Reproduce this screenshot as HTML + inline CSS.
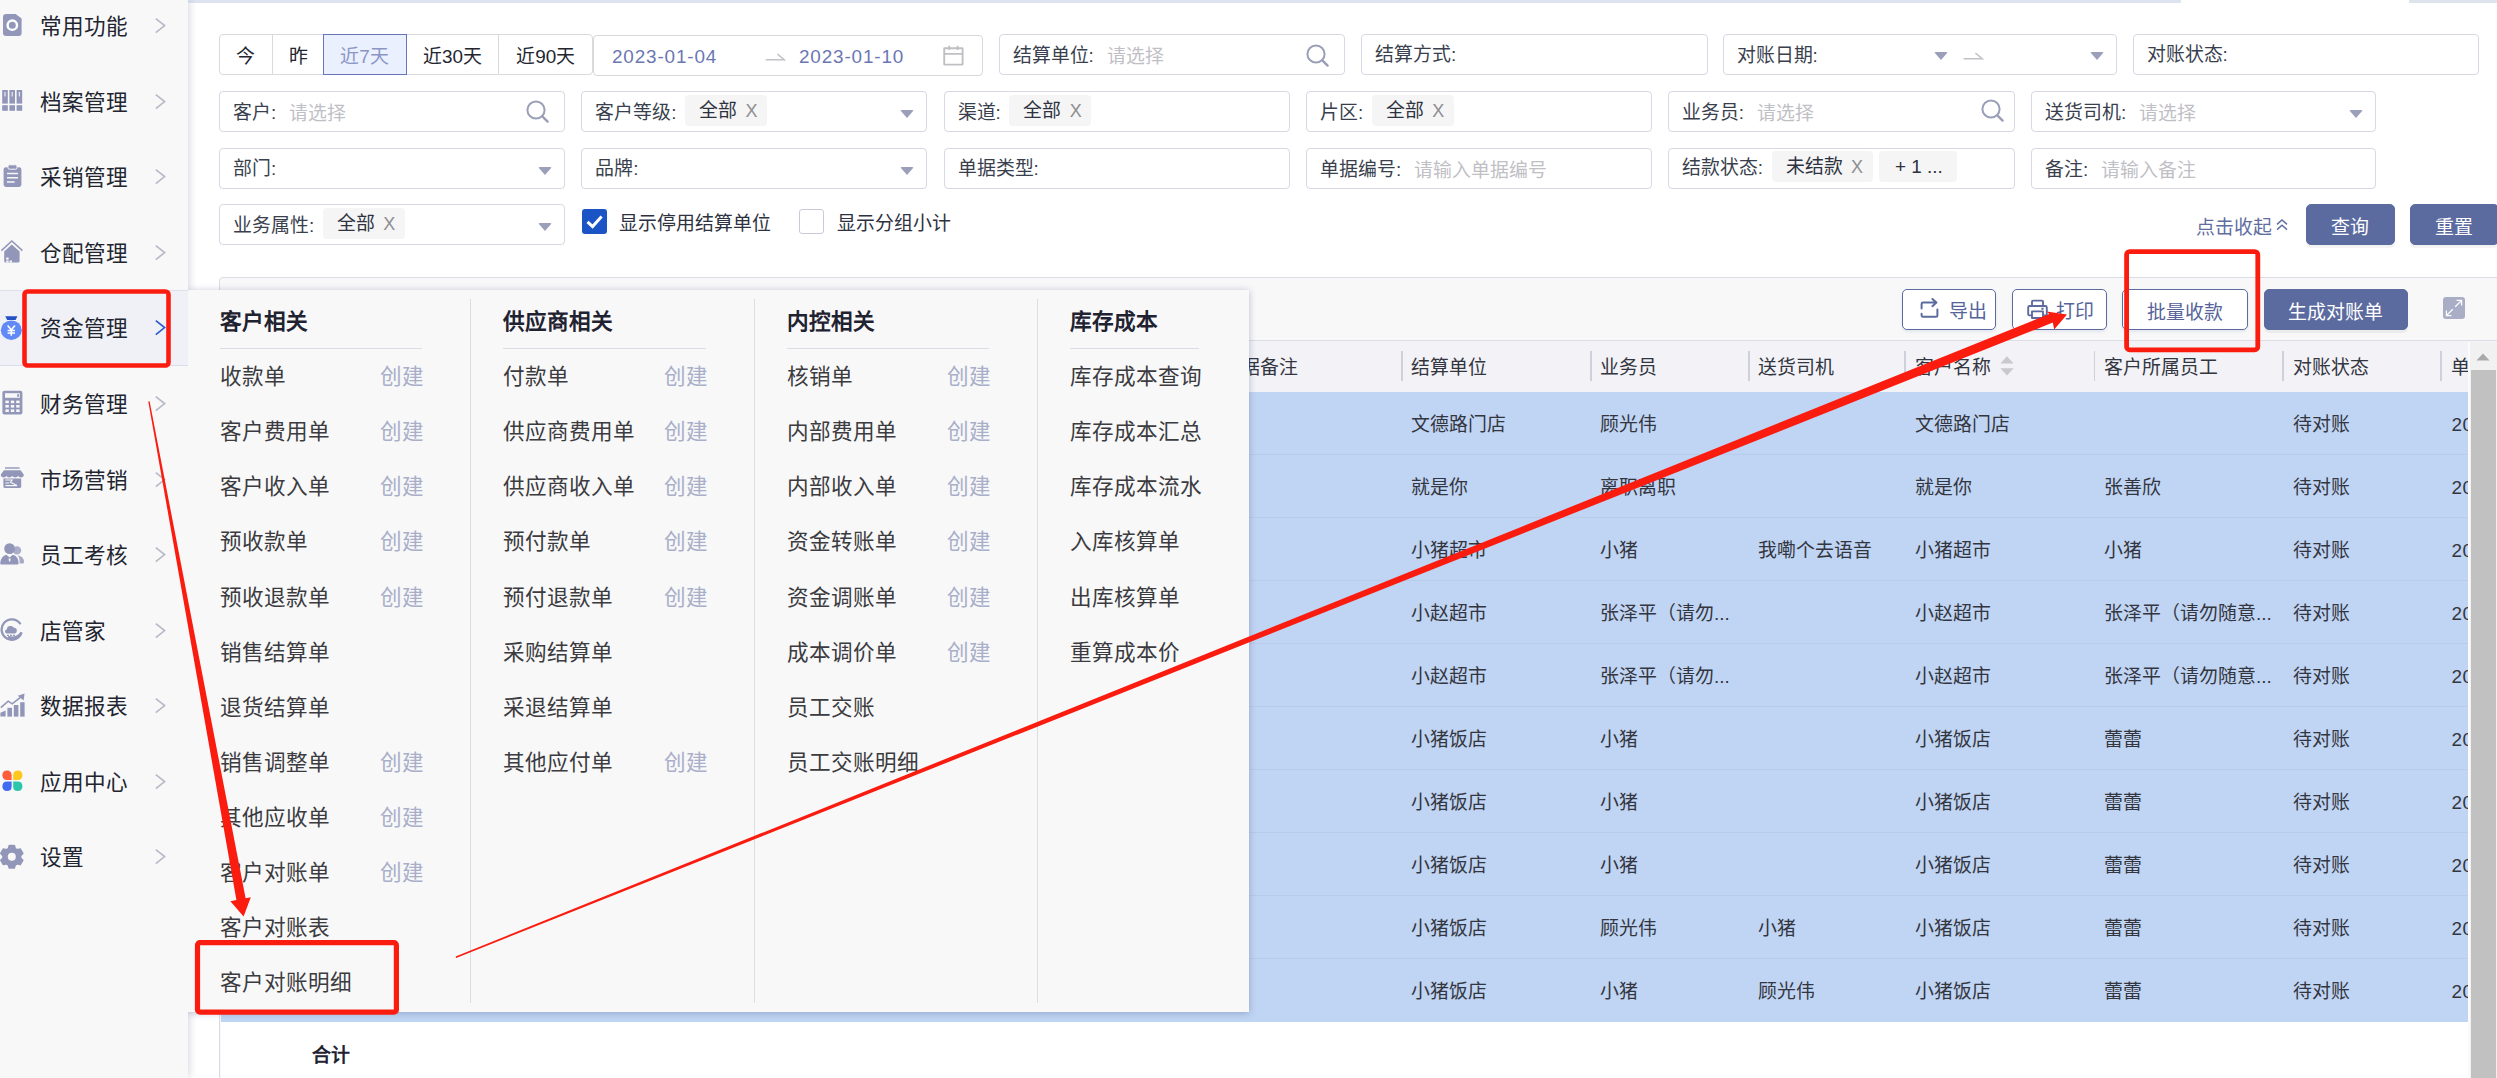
<!DOCTYPE html>
<html lang="zh-CN"><head><meta charset="utf-8"><title>客户对账明细</title>
<style>
*{box-sizing:border-box;margin:0;padding:0}
html,body{width:2497px;height:1078px;overflow:hidden;background:#fff}
body{position:relative;font-family:"Liberation Sans",sans-serif;font-size:18.9px;color:#353a48}
.abs{position:absolute}
.box{position:absolute;height:40.5px;border:1.35px solid #d6d8e4;border-radius:4px;background:#fff;white-space:nowrap;overflow:hidden}
.box .lb{position:absolute;left:13px;top:0;line-height:37px;color:#3a3f4e}
.box .lb b{font-weight:normal;position:relative}
.box .ph{color:#bfc0c6;margin-left:13px;position:relative}
.tag{display:inline-block;vertical-align:top;margin-top:3.5px;margin-left:8.5px;height:31px;line-height:29px;background:#f5f5f5;border-radius:4px;padding:0 9.5px 0 14px;color:#2e3240;position:relative}
.tag+.tag{margin-left:6px;padding:0 14.5px 0 16.5px}
.tag u{text-decoration:none;position:relative}
.tag i{font-style:normal;color:#8e8e92;margin-left:8.5px;font-size:18px;position:relative}
.caret{position:absolute;width:0;height:0;border-left:7px solid transparent;border-right:7px solid transparent;border-top:8px solid #9b9fb9;border-radius:2px}
.sb{position:absolute;left:0;width:188px;height:76px}
.sb span{position:absolute;left:40px;top:2px;line-height:74px;font-size:21.6px;color:#22252f}
.sb svg.ch{position:absolute;left:154px;top:28px}
.mi{position:absolute;font-size:21.6px;line-height:30px;color:#3b3b40;white-space:nowrap}
.mc{position:absolute;font-size:21.6px;line-height:30px;color:#a9afc9;white-space:nowrap}
.mh{position:absolute;font-size:21.6px;line-height:30px;font-weight:bold;color:#1f2230;white-space:nowrap}
.th{position:absolute;top:342.5px;height:50px;line-height:50px;color:#33363f;white-space:nowrap}
.td{position:absolute;line-height:63px;height:63px;color:#33363f;white-space:nowrap}
.btn{position:absolute;height:40px;border:1.35px solid #5c6b9f;border-radius:5px;background:#fff;color:#55639a;text-align:center;line-height:40px;white-space:nowrap;box-shadow:0 2px 3px rgba(92,107,159,.12)}
.btn.p{background:#5c6b9f;color:#fff}
</style></head><body>

<div class="abs" style="left:188px;top:0;width:1993px;height:3px;background:#dde3f0"></div>
<div class="abs" style="left:2409px;top:0;width:88px;height:3px;background:#dfe3ee"></div>
<div class="abs" style="left:219px;top:34px;width:374px;height:41px;border:1.5px solid #d9d9de;border-radius:4px;background:#fff"></div>
<div class="abs" style="left:219px;top:34px;width:53px;height:41px;text-align:center;line-height:41px;padding-top:2px;color:#23262f">今</div>
<div class="abs" style="left:272px;top:34px;width:51px;height:41px;border-left:1.8px solid #d9d9de;text-align:center;line-height:41px;padding-top:2px;color:#23262f">昨</div>
<div class="abs" style="left:322.5px;top:33.5px;width:84px;height:41.5px;border:1.6px solid #6775b8;background:#eaf0fd;color:#8b96c5;text-align:center;line-height:41px;padding-top:1.5px;z-index:2">近7天</div>
<div class="abs" style="left:406px;top:34px;width:92px;height:41px;border-left:1.8px solid #d9d9de;text-align:center;line-height:41px;padding-top:2px;color:#23262f">近30天</div>
<div class="abs" style="left:498px;top:34px;width:94.5px;height:41px;border-left:1.8px solid #d9d9de;text-align:center;line-height:41px;padding-top:2px;color:#23262f">近90天</div>
<div class="box" style="left:592.5px;top:34.5px;width:390px;height:41.3px;border:1.5px solid #d9d9dc"><span class="abs" style="left:18.5px;top:0;line-height:42px;color:#6a77b3;letter-spacing:.85px">2023-01-04</span><span class="abs" style="left:205.5px;top:0;line-height:42px;color:#6a77b3;letter-spacing:.85px">2023-01-10</span><svg class="abs" style="left:168px;top:12px" width="24" height="14" viewBox="0 0 24 14"><path d="M3.7 11.7 H22.2 L15.4 6" fill="none" stroke="#c1c1c6" stroke-width="1.6"/></svg><svg class="abs" style="left:348px;top:8.3px" width="24" height="24" viewBox="0 0 24 24"><rect x="2.2" y="4.2" width="18.4" height="16.4" rx=".4" fill="none" stroke="#c0c0c4" stroke-width="1.9"/><path d="M2.2 9.8 H20.6 M7.2 1.8 V6 M15.6 1.8 V6" stroke="#c0c0c4" stroke-width="1.8" fill="none"/></svg></div>
<div class="box" style="left:998.5px;top:34px;width:346px"><span class="lb"><b style="top:2px">结算单位:</b><span class="ph" style="top:2.7px">请选择</span></span></div>
<svg class="abs" style="left:1305.0px;top:42.5px" width="26" height="26" viewBox="0 0 26 26"><circle cx="11" cy="11" r="8.6" fill="none" stroke="#9a9fb8" stroke-width="2"/><path d="M17.3 17.3 L22.6 22.6" stroke="#9a9fb8" stroke-width="2.4" stroke-linecap="round"/></svg>
<div class="box" style="left:1361px;top:34px;width:346.5px"><span class="lb"><b style="top:0.5px">结算方式:</b></span></div>
<div class="box" style="left:1722.5px;top:34px;width:394px"><span class="lb"><b style="top:1.8px">对账日期:</b></span><svg class="abs" style="left:236px;top:12px" width="24" height="14" viewBox="0 0 24 14"><path d="M3.7 11.7 H22.2 L15.4 6" fill="none" stroke="#c1c1c6" stroke-width="1.6"/></svg></div>
<div class="caret" style="left:1934.3px;top:51.8px"></div>
<div class="caret" style="left:2089.5px;top:51.8px"></div>
<div class="box" style="left:2132.5px;top:34px;width:346px"><span class="lb"><b style="top:0.5px">对账状态:</b></span></div>
<div class="box" style="left:219px;top:91px;width:346px"><span class="lb"><b style="top:2px">客户:</b><span class="ph" style="top:2.7px">请选择</span></span></div>
<svg class="abs" style="left:524.5px;top:98.5px" width="26" height="26" viewBox="0 0 26 26"><circle cx="11" cy="11" r="8.6" fill="none" stroke="#9a9fb8" stroke-width="2"/><path d="M17.3 17.3 L22.6 22.6" stroke="#9a9fb8" stroke-width="2.4" stroke-linecap="round"/></svg>
<div class="box" style="left:581.25px;top:91px;width:346px"><span class="lb"><b style="top:1.6px">客户等级:</b><span class="tag" style="top:-0.5px"><u style="top:0.8px">全部</u><i style="top:1.3px">X</i></span></span></div>
<div class="caret" style="left:899.75px;top:109.5px"></div>
<div class="box" style="left:943.6px;top:91px;width:346px"><span class="lb"><b style="top:1.6px">渠道:</b><span class="tag" style="top:-0.5px"><u style="top:0.8px">全部</u><i style="top:1.3px">X</i></span></span></div>
<div class="box" style="left:1306px;top:91px;width:346px"><span class="lb"><b style="top:1.6px">片区:</b><span class="tag" style="top:-0.5px"><u style="top:0.8px">全部</u><i style="top:1.3px">X</i></span></span></div>
<div class="box" style="left:1667.8px;top:91px;width:347px"><span class="lb"><b style="top:2px">业务员:</b><span class="ph" style="top:2.7px">请选择</span></span></div>
<svg class="abs" style="left:1980.3px;top:97.7px" width="26" height="26" viewBox="0 0 26 26"><circle cx="11" cy="11" r="8.6" fill="none" stroke="#9a9fb8" stroke-width="2"/><path d="M17.3 17.3 L22.6 22.6" stroke="#9a9fb8" stroke-width="2.4" stroke-linecap="round"/></svg>
<div class="box" style="left:2030.8999999999999px;top:91px;width:345.6px"><span class="lb"><b style="top:2px">送货司机:</b><span class="ph" style="top:2.7px">请选择</span></span></div>
<div class="caret" style="left:2349.0px;top:109.5px"></div>
<div class="box" style="left:219px;top:148px;width:346px"><span class="lb"><b style="top:0.5px">部门:</b></span></div>
<div class="caret" style="left:537.5px;top:166.5px"></div>
<div class="box" style="left:581.25px;top:148px;width:346px"><span class="lb"><b style="top:0.5px">品牌:</b></span></div>
<div class="caret" style="left:899.75px;top:166.5px"></div>
<div class="box" style="left:943.6px;top:148px;width:346px"><span class="lb"><b style="top:0.5px">单据类型:</b></span></div>
<div class="box" style="left:1306px;top:148px;width:346px"><span class="lb"><b style="top:2px">单据编号:</b><span class="ph" style="top:2.7px">请输入单据编号</span></span></div>
<div class="box" style="left:1667.8px;top:148px;width:347px"><span class="lb"><b style="top:0px">结款状态:</b><span class="tag" style="top:-1.5px"><u style="top:0.5px">未结款</u><i style="top:1.0px">X</i></span><span class="tag" style="top:-1.5px"><u style="top:0.5px">+ 1 ...</u></span></span></div>
<div class="box" style="left:2030.8999999999999px;top:148px;width:345.6px"><span class="lb"><b style="top:2px">备注:</b><span class="ph" style="top:2.7px">请输入备注</span></span></div>
<div class="box" style="left:219px;top:204px;width:346px"><span class="lb"><b style="top:1.6px">业务属性:</b><span class="tag" style="top:-0.5px"><u style="top:0.8px">全部</u><i style="top:1.3px">X</i></span></span></div>
<div class="caret" style="left:537.5px;top:222.5px"></div>
<div class="abs" style="left:581.5px;top:208.5px;width:25px;height:25px;background:#1b55c5;border-radius:3px"></div>
<svg class="abs" style="left:581.5px;top:208.5px" width="25" height="25" viewBox="0 0 25 25"><path d="M5.5 12.8 L10.6 17.6 L19.6 7.6" fill="none" stroke="#fff" stroke-width="3"/></svg>
<div class="abs" style="left:619px;top:209.3px;line-height:30px;color:#2e3240;white-space:nowrap">显示停用结算单位</div>
<div class="abs" style="left:799px;top:208.5px;width:25px;height:25px;background:#fff;border:1.35px solid #c9cbdc;border-radius:3px"></div>
<div class="abs" style="left:837px;top:209.3px;line-height:30px;color:#2e3240;white-space:nowrap">显示分组小计</div>
<div class="abs" style="left:2196px;top:213px;line-height:30px;color:#5f6da1;white-space:nowrap">点击收起</div>
<svg class="abs" style="left:2275px;top:217.5px" width="14" height="14" viewBox="0 0 14 14"><path d="M2 6.4 L7 2 L12 6.4 M2 11.6 L7 7.2 L12 11.6" fill="none" stroke="#5f6da1" stroke-width="1.4"/></svg>
<div class="btn p" style="left:2305.5px;top:204px;width:89px;height:41px;line-height:45px;box-shadow:0 2.7px 1px rgba(0,0,0,.05)">查询</div>
<div class="btn p" style="left:2409.5px;top:204px;width:89px;height:41px;line-height:45px;border-radius:5px;box-shadow:0 2.7px 1px rgba(0,0,0,.05)">重置</div>
<div class="abs" style="left:219px;top:277px;width:2300px;height:830px;border:1.35px solid #d9dbe6;border-radius:4px 0 0 0;background:#f8f8f9"></div>
<div class="abs" style="left:220px;top:339.6px;width:2277px;height:1.35px;background:#dcdde6"></div>
<div class="abs" style="left:220px;top:341px;width:2277px;height:50.6px;background:#f2f2f7"></div>
<div class="abs" style="left:220.8px;top:391.6px;width:2247.4px;height:630px;background:#c0d4f3"></div>
<div class="abs" style="left:220px;top:453.5px;width:2248px;height:1.2px;background:#b8cbeb"></div>
<div class="abs" style="left:220px;top:516.5px;width:2248px;height:1.2px;background:#b8cbeb"></div>
<div class="abs" style="left:220px;top:579.5px;width:2248px;height:1.2px;background:#b8cbeb"></div>
<div class="abs" style="left:220px;top:642.5px;width:2248px;height:1.2px;background:#b8cbeb"></div>
<div class="abs" style="left:220px;top:705.5px;width:2248px;height:1.2px;background:#b8cbeb"></div>
<div class="abs" style="left:220px;top:768.5px;width:2248px;height:1.2px;background:#b8cbeb"></div>
<div class="abs" style="left:220px;top:831.5px;width:2248px;height:1.2px;background:#b8cbeb"></div>
<div class="abs" style="left:220px;top:894.5px;width:2248px;height:1.2px;background:#b8cbeb"></div>
<div class="abs" style="left:220px;top:957.5px;width:2248px;height:1.2px;background:#b8cbeb"></div>
<div class="abs" style="left:220.5px;top:1021.6px;width:2248px;height:60px;background:#fff"></div>
<div class="abs" style="left:312px;top:1041px;line-height:30px;font-weight:bold;color:#1f2230">合计</div>
<div class="th" style="left:1222px">单据备注</div>
<div class="th" style="left:1411px">结算单位</div>
<div class="th" style="left:1600px">业务员</div>
<div class="th" style="left:1758px">送货司机</div>
<div class="th" style="left:1915px">客户名称</div>
<div class="th" style="left:2104px">客户所属员工</div>
<div class="th" style="left:2293px">对账状态</div>
<div class="th" style="left:2451px">单据</div>
<div class="abs" style="left:1401.0px;top:351px;width:1.8px;height:29.5px;background:#cfd0db"></div>
<div class="abs" style="left:1589.8px;top:351px;width:1.8px;height:29.5px;background:#cfd0db"></div>
<div class="abs" style="left:1747.9px;top:351px;width:1.8px;height:29.5px;background:#cfd0db"></div>
<div class="abs" style="left:1904.4px;top:351px;width:1.8px;height:29.5px;background:#cfd0db"></div>
<div class="abs" style="left:2093.5px;top:351px;width:1.8px;height:29.5px;background:#cfd0db"></div>
<div class="abs" style="left:2282.4px;top:351px;width:1.8px;height:29.5px;background:#cfd0db"></div>
<div class="abs" style="left:2440.4px;top:351px;width:1.8px;height:29.5px;background:#cfd0db"></div>
<svg class="abs" style="left:1999px;top:355px" width="16" height="22" viewBox="0 0 16 22"><path d="M8 1.2 L14.6 8.4 H1.4 Z M8 20.4 L14.6 13.2 H1.4 Z" fill="#c9c9cd"/></svg>
<div class="td" style="left:1411px;top:393px">文德路门店</div>
<div class="td" style="left:1600px;top:393px">顾光伟</div>
<div class="td" style="left:1915px;top:393px">文德路门店</div>
<div class="td" style="left:2293px;top:393px">待对账</div>
<div class="td" style="left:2451.4px;top:393px;width:16.6px;overflow:hidden;letter-spacing:.6px">2023</div>
<div class="td" style="left:1411px;top:456px">就是你</div>
<div class="td" style="left:1600px;top:456px">离职离职</div>
<div class="td" style="left:1915px;top:456px">就是你</div>
<div class="td" style="left:2104px;top:456px">张善欣</div>
<div class="td" style="left:2293px;top:456px">待对账</div>
<div class="td" style="left:2451.4px;top:456px;width:16.6px;overflow:hidden;letter-spacing:.6px">2023</div>
<div class="td" style="left:1411px;top:519px">小猪超市</div>
<div class="td" style="left:1600px;top:519px">小猪</div>
<div class="td" style="left:1758px;top:519px">我嘞个去语音</div>
<div class="td" style="left:1915px;top:519px">小猪超市</div>
<div class="td" style="left:2104px;top:519px">小猪</div>
<div class="td" style="left:2293px;top:519px">待对账</div>
<div class="td" style="left:2451.4px;top:519px;width:16.6px;overflow:hidden;letter-spacing:.6px">2023</div>
<div class="td" style="left:1411px;top:582px">小赵超市</div>
<div class="td" style="left:1600px;top:582px">张泽平（请勿...</div>
<div class="td" style="left:1915px;top:582px">小赵超市</div>
<div class="td" style="left:2104px;top:582px">张泽平（请勿随意...</div>
<div class="td" style="left:2293px;top:582px">待对账</div>
<div class="td" style="left:2451.4px;top:582px;width:16.6px;overflow:hidden;letter-spacing:.6px">2023</div>
<div class="td" style="left:1411px;top:645px">小赵超市</div>
<div class="td" style="left:1600px;top:645px">张泽平（请勿...</div>
<div class="td" style="left:1915px;top:645px">小赵超市</div>
<div class="td" style="left:2104px;top:645px">张泽平（请勿随意...</div>
<div class="td" style="left:2293px;top:645px">待对账</div>
<div class="td" style="left:2451.4px;top:645px;width:16.6px;overflow:hidden;letter-spacing:.6px">2023</div>
<div class="td" style="left:1411px;top:708px">小猪饭店</div>
<div class="td" style="left:1600px;top:708px">小猪</div>
<div class="td" style="left:1915px;top:708px">小猪饭店</div>
<div class="td" style="left:2104px;top:708px">蕾蕾</div>
<div class="td" style="left:2293px;top:708px">待对账</div>
<div class="td" style="left:2451.4px;top:708px;width:16.6px;overflow:hidden;letter-spacing:.6px">2023</div>
<div class="td" style="left:1411px;top:771px">小猪饭店</div>
<div class="td" style="left:1600px;top:771px">小猪</div>
<div class="td" style="left:1915px;top:771px">小猪饭店</div>
<div class="td" style="left:2104px;top:771px">蕾蕾</div>
<div class="td" style="left:2293px;top:771px">待对账</div>
<div class="td" style="left:2451.4px;top:771px;width:16.6px;overflow:hidden;letter-spacing:.6px">2023</div>
<div class="td" style="left:1411px;top:834px">小猪饭店</div>
<div class="td" style="left:1600px;top:834px">小猪</div>
<div class="td" style="left:1915px;top:834px">小猪饭店</div>
<div class="td" style="left:2104px;top:834px">蕾蕾</div>
<div class="td" style="left:2293px;top:834px">待对账</div>
<div class="td" style="left:2451.4px;top:834px;width:16.6px;overflow:hidden;letter-spacing:.6px">2023</div>
<div class="td" style="left:1411px;top:897px">小猪饭店</div>
<div class="td" style="left:1600px;top:897px">顾光伟</div>
<div class="td" style="left:1758px;top:897px">小猪</div>
<div class="td" style="left:1915px;top:897px">小猪饭店</div>
<div class="td" style="left:2104px;top:897px">蕾蕾</div>
<div class="td" style="left:2293px;top:897px">待对账</div>
<div class="td" style="left:2451.4px;top:897px;width:16.6px;overflow:hidden;letter-spacing:.6px">2023</div>
<div class="td" style="left:1411px;top:960px">小猪饭店</div>
<div class="td" style="left:1600px;top:960px">小猪</div>
<div class="td" style="left:1758px;top:960px">顾光伟</div>
<div class="td" style="left:1915px;top:960px">小猪饭店</div>
<div class="td" style="left:2104px;top:960px">蕾蕾</div>
<div class="td" style="left:2293px;top:960px">待对账</div>
<div class="td" style="left:2451.4px;top:960px;width:16.6px;overflow:hidden;letter-spacing:.6px">2023</div>
<div class="abs" style="left:2468.2px;top:341.5px;width:30px;height:740px;background:#f1f1f1;border-left:2.5px solid #fbfbfb"></div>
<div class="abs" style="left:2471.2px;top:370px;width:25.2px;height:710px;background:#c1c1c1"></div>
<svg class="abs" style="left:2476px;top:351.5px" width="14" height="10" viewBox="0 0 14 10"><path d="M7 1.5 L13.5 8.5 H0.5 Z" fill="#a9a9a9"/></svg>
<div class="btn" style="left:1902px;top:289.2px;width:94px;height:40.4px;line-height:43.5px"><span style="margin-left:37px">导出</span></div>
<svg class="abs" style="left:1918px;top:298px" width="24" height="24" viewBox="0 0 24 24"><path d="M3.6 10.4 V6 Q3.6 4.6 5 4.6 H17.6 M14.4 1 L18.4 4.6 L14.4 8.2 M19.4 11.6 V17.4 Q19.4 18.8 18 18.8 H5 Q3.6 18.8 3.6 17.4 V15.8" fill="none" stroke="#5c6b9f" stroke-width="2" stroke-linecap="round" stroke-linejoin="round"/></svg>
<div class="btn" style="left:2012px;top:289.2px;width:94.5px;height:40.4px;line-height:43.5px"><span style="margin-left:32px">打印</span></div>
<svg class="abs" style="left:2026px;top:298px" width="24" height="24" viewBox="0 0 24 24"><path d="M6 8 V3.6 Q6 2.6 7 2.6 H16 Q17 2.6 17 3.6 V8 M6 17.4 H3.4 Q2.2 17.4 2.2 16.2 V9.4 Q2.2 8 3.6 8 H19.4 Q20.8 8 20.8 9.4 V16.2 Q20.8 17.4 19.6 17.4 H17 M6 13.4 H17 V20 H6 Z M15.4 10.8 H17.6" fill="none" stroke="#5c6b9f" stroke-width="1.9" stroke-linejoin="round"/></svg>
<div class="btn" style="left:2121.5px;top:289.2px;width:126px;height:40.4px;line-height:46px">批量收款</div>
<div class="btn p" style="left:2263.5px;top:289.2px;width:144.5px;height:40.5px;line-height:46px;box-shadow:0 2.7px 1px rgba(0,0,0,.05)">生成对账单</div>
<div class="abs" style="left:2442.5px;top:297px;width:22px;height:22px;background:#a9adc6;border-radius:3px"></div>
<svg class="abs" style="left:2442.5px;top:297px" width="22" height="22" viewBox="0 0 22 22"><path d="M12.2 9.8 L18.4 3.6 M13.6 3.4 H18.6 V8.4 M9.8 12.2 L3.6 18.4 M3.4 13.6 V18.6 H8.4" fill="none" stroke="#fff" stroke-width="1.3"/></svg>
<div class="abs" style="left:0;top:0;width:188px;height:1078px;background:#f8f8f9;box-shadow:1px 0 8px rgba(40,45,80,.2)"></div>
<div class="abs" style="left:0;top:289.5px;width:188px;height:76.5px;background:#f0f1f7;border-bottom:1.35px solid #dcdde8;border-top:1.5px solid #dfe0e9"></div>
<div class="sb" style="top:-11.8px"><span>常用功能</span><svg class="ch" width="13" height="19" viewBox="0 0 13 19"><path d="M1.8 2.6 L10.6 9.6 L1.8 16.6" fill="none" stroke="#b8bac8" stroke-width="1.7"/></svg></div>
<svg class="abs" style="left:2px;top:13px" width="21" height="24" viewBox="0 0 21 24"><path d="M4 1 H13.6 L19.6 5.6 V20 Q19.6 23 16.6 23 H4 Q1 23 1 20 V4 Q1 1 4 1 Z" fill="#9296b8"/><circle cx="10.3" cy="12.2" r="4.7" fill="none" stroke="#fff" stroke-width="2.4"/></svg>
<div class="sb" style="top:63.8px"><span>档案管理</span><svg class="ch" width="13" height="19" viewBox="0 0 13 19"><path d="M1.8 2.6 L10.6 9.6 L1.8 16.6" fill="none" stroke="#b8bac8" stroke-width="1.7"/></svg></div>
<svg class="abs" style="left:2px;top:89px" width="21" height="23" viewBox="0 0 21 23"><g fill="#9296b8"><rect x="0.2" y="1" width="5.6" height="13.6"/><rect x="7.4" y="1" width="5.6" height="13.6"/><rect x="14.6" y="1" width="5.6" height="13.6"/><rect x="0.2" y="16.2" width="5.6" height="5.6"/><rect x="7.4" y="16.2" width="5.6" height="5.6"/><rect x="14.6" y="16.2" width="5.6" height="5.6"/></g><path d="M3 3 V7.4 M10.2 3 V7.4 M17.4 3 V7.4" stroke="#e9eaf1" stroke-width="1.2"/></svg>
<div class="sb" style="top:139.3px"><span>采销管理</span><svg class="ch" width="13" height="19" viewBox="0 0 13 19"><path d="M1.8 2.6 L10.6 9.6 L1.8 16.6" fill="none" stroke="#b8bac8" stroke-width="1.7"/></svg></div>
<svg class="abs" style="left:3px;top:164px" width="19" height="24" viewBox="0 0 19 24"><path d="M3 3.2 H16 Q18.4 3.2 18.4 5.6 V20.6 Q18.4 23 16 23 H3 Q0.6 23 0.6 20.6 V5.6 Q0.6 3.2 3 3.2 Z" fill="#9296b8"/><rect x="5" y="0.8" width="9" height="4.4" rx="1.4" fill="#9296b8" stroke="#f8f8f9" stroke-width="1"/><path d="M4 9.6 H15 M4 13.8 H15 M4 18 H11.6" stroke="#f8f8f9" stroke-width="1.5"/></svg>
<div class="sb" style="top:214.8px"><span>仓配管理</span><svg class="ch" width="13" height="19" viewBox="0 0 13 19"><path d="M1.8 2.6 L10.6 9.6 L1.8 16.6" fill="none" stroke="#b8bac8" stroke-width="1.7"/></svg></div>
<svg class="abs" style="left:0;top:239px" width="24" height="25" viewBox="0 0 24 25"><path d="M1.4 11.6 L11.8 2 L22.4 11.6" fill="none" stroke="#9296b8" stroke-width="1.5"/><path d="M4.2 12.4 L11.8 5.6 L19.6 12.4 V22 Q19.6 23.6 18 23.6 H5.8 Q4.2 23.6 4.2 22 Z" fill="#9296b8"/><path d="M6.2 18.4 H8.6 V20.8 H6.2 Z M6.2 21.6 H8.6 V23.4 H6.2 Z M9.6 21.6 H12 V23.4 H9.6 Z" fill="#f8f8f9"/></svg>
<div class="sb" style="top:290.4px"><span>资金管理</span><svg class="ch" width="13" height="19" viewBox="0 0 13 19"><path d="M1.8 2.6 L10.6 9.6 L1.8 16.6" fill="none" stroke="#2d5bd0" stroke-width="1.7"/></svg></div>
<svg class="abs" style="left:0;top:315px" width="24" height="26" viewBox="0 0 24 26"><path d="M5.2 1.2 H17.4 L15.6 5 H7.2 Z" fill="#2452c4"/><ellipse cx="11.3" cy="15.2" rx="10.5" ry="9.7" fill="#628af6"/><path d="M7.6 10.4 L11.3 14.8 L15 10.4 M11.3 14.8 V20.8 M7.6 15.4 H15 M7.6 18 H15" fill="none" stroke="#fff" stroke-width="1.5"/></svg>
<div class="sb" style="top:365.9px"><span>财务管理</span><svg class="ch" width="13" height="19" viewBox="0 0 13 19"><path d="M1.8 2.6 L10.6 9.6 L1.8 16.6" fill="none" stroke="#b8bac8" stroke-width="1.7"/></svg></div>
<svg class="abs" style="left:2px;top:390px" width="21" height="26" viewBox="0 0 21 26"><rect x="0.4" y="0.8" width="20" height="23.8" rx="2" fill="#9296b8"/><rect x="3" y="3.2" width="14.8" height="4.6" fill="#f8f8f9"/><rect x="15.2" y="4.2" width="1.8" height="2.6" fill="#9296b8"/><g fill="#f8f8f9"><rect x="3.4" y="10.6" width="3.4" height="2.6"/><rect x="8.8" y="10.6" width="3.4" height="2.6"/><rect x="14.2" y="10.6" width="3.4" height="2.6"/><rect x="3.4" y="15" width="3.4" height="2.6"/><rect x="8.8" y="15" width="3.4" height="2.6"/><rect x="14.2" y="15" width="3.4" height="2.6"/><rect x="3.4" y="19.4" width="3.4" height="2.6"/><rect x="8.8" y="19.4" width="3.4" height="2.6"/><rect x="14.2" y="19.4" width="3.4" height="2.6"/></g></svg>
<div class="sb" style="top:441.5px"><span>市场营销</span><svg class="ch" width="13" height="19" viewBox="0 0 13 19"><path d="M1.8 2.6 L10.6 9.6 L1.8 16.6" fill="none" stroke="#b8bac8" stroke-width="1.7"/></svg></div>
<svg class="abs" style="left:0;top:466px" width="25" height="24" viewBox="0 0 25 24"><path d="M5 2 H19.6" stroke="#9296b8" stroke-width="1.4"/><path d="M4 4.2 H20.6 L23.8 8.4 Q23.8 11.4 20.8 11.4 Q19 11.4 18.2 10 Q17.2 11.4 15.2 11.4 Q13.2 11.4 12.3 10 Q11.4 11.4 9.4 11.4 Q7.4 11.4 6.4 10 Q5.6 11.4 3.8 11.4 Q0.8 11.4 0.8 8.4 Z" fill="#9296b8"/><path d="M3.4 12.6 H21.2 V20.4 Q21.2 22 19.6 22 H5 Q3.4 22 3.4 20.4 Z" fill="#9296b8"/><path d="M5.4 14 H12.2 L10.4 16.2 L17 19.6 H5.4 M5.4 17 H9" fill="none" stroke="#f8f8f9" stroke-width="1.1"/></svg>
<div class="sb" style="top:517.1px"><span>员工考核</span><svg class="ch" width="13" height="19" viewBox="0 0 13 19"><path d="M1.8 2.6 L10.6 9.6 L1.8 16.6" fill="none" stroke="#b8bac8" stroke-width="1.7"/></svg></div>
<svg class="abs" style="left:0;top:542px" width="25" height="24" viewBox="0 0 25 24"><circle cx="17" cy="8.4" r="4.2" fill="#9296b8" opacity=".75"/><path d="M17.6 13.2 Q24 14.4 24 20.2 Q24 21.4 22.8 21.4 H19.6 Q20 15.6 17.6 13.2 Z" fill="#9296b8" opacity=".8"/><circle cx="9.6" cy="6.6" r="5.4" fill="#9296b8"/><path d="M1.4 22.6 Q0 22.6 0.2 21 Q1 14.2 6.4 12.8 L9.6 15.6 L12.8 12.8 Q18.4 14.4 18.6 21 Q18.8 22.6 17.2 22.6 Z" fill="#9296b8"/><path d="M8.6 16.6 H10.6 L10.2 19.4 H9 Z" fill="#f8f8f9"/></svg>
<div class="sb" style="top:592.6px"><span>店管家</span><svg class="ch" width="13" height="19" viewBox="0 0 13 19"><path d="M1.8 2.6 L10.6 9.6 L1.8 16.6" fill="none" stroke="#b8bac8" stroke-width="1.7"/></svg></div>
<svg class="abs" style="left:0;top:618px" width="24" height="25" viewBox="0 0 24 25"><path d="M20 5.4 A10.2 10.2 0 1 0 21.6 14.4 Q17 21 9 19.2" fill="none" stroke="#9296b8" stroke-width="2.3" stroke-linecap="round"/><path d="M7 15.4 Q5 15.4 5 13.4 Q5 11.6 6.8 11.4 Q7 8.4 10 8 Q12.8 7.4 13.8 9.8 Q16.8 9.6 16.8 12.6 Q16.8 15.4 14.4 15.4 Z" fill="#9296b8"/><path d="M7 17.4 H15" stroke="#9296b8" stroke-width="1.4" stroke-dasharray="2 1"/></svg>
<div class="sb" style="top:668.1px"><span>数据报表</span><svg class="ch" width="13" height="19" viewBox="0 0 13 19"><path d="M1.8 2.6 L10.6 9.6 L1.8 16.6" fill="none" stroke="#b8bac8" stroke-width="1.7"/></svg></div>
<svg class="abs" style="left:0;top:692px" width="26" height="26" viewBox="0 0 26 26"><g fill="#9296b8"><path d="M0.4 20.8 L5.6 18.6 V24.6 H0.4 Z"/><rect x="7.4" y="15.8" width="4.6" height="8.8"/><rect x="13.8" y="13" width="4.6" height="11.6"/><rect x="20.2" y="10.2" width="4.4" height="14.4"/><path d="M24.6 1.4 L23.6 8.4 L17.8 3.8 Z"/></g><path d="M0.8 15.6 L8.2 9.2 L12.2 11.8 L21.4 4.6" fill="none" stroke="#9296b8" stroke-width="1.6"/></svg>
<div class="sb" style="top:743.7px"><span>应用中心</span><svg class="ch" width="13" height="19" viewBox="0 0 13 19"><path d="M1.8 2.6 L10.6 9.6 L1.8 16.6" fill="none" stroke="#b8bac8" stroke-width="1.7"/></svg></div>
<svg class="abs" style="left:2px;top:770px" width="21" height="22" viewBox="0 0 21 22"><path d="M5 0.6 Q9.6 0.6 9.6 5.2 V10 H5 Q0.4 10 0.4 5.3 Q0.4 0.6 5 0.6 Z" fill="#ff5c3c"/><path d="M15.8 0.6 Q20.4 0.6 20.4 5.3 Q20.4 10 15.8 10 H11.2 V5.2 Q11.2 0.6 15.8 0.6 Z" fill="#ffc61e"/><path d="M5 11.6 H9.6 V16.4 Q9.6 21 5 21 Q0.4 21 0.4 16.3 Q0.4 11.6 5 11.6 Z" fill="#3f6cf0"/><path d="M11.2 11.6 H15.8 Q20.4 11.6 20.4 16.3 Q20.4 21 15.8 21 Q11.2 21 11.2 16.4 Z" fill="#2cc6aa"/></svg>
<div class="sb" style="top:819.2px"><span>设置</span><svg class="ch" width="13" height="19" viewBox="0 0 13 19"><path d="M1.8 2.6 L10.6 9.6 L1.8 16.6" fill="none" stroke="#b8bac8" stroke-width="1.7"/></svg></div>
<svg class="abs" style="left:0;top:844px" width="24" height="26" viewBox="0 0 24 26"><path d="M9.3 1.6 H14.3 L15.2 4.6 L17.2 5.8 L20.2 5 L22.8 9.4 L20.6 11.6 V14 L22.8 16.2 L20.2 20.6 L17.2 19.8 L15.2 21 L14.3 24 H9.3 L8.4 21 L6.4 19.8 L3.4 20.6 L0.8 16.2 L3 14 V11.6 L0.8 9.4 L3.4 5 L6.4 5.8 L8.4 4.6 Z" fill="#9296b8" stroke="#9296b8" stroke-width="1.6" stroke-linejoin="round"/><circle cx="11.8" cy="12.8" r="4" fill="#f8f8f9"/></svg>
<div class="abs" style="left:188px;top:290px;width:1060.7px;height:722px;background:#f8f8f9;box-shadow:0 1px 7px rgba(40,55,110,.30);clip-path:inset(-12px -20px -20px 0)"></div>
<div class="abs" style="left:469.5px;top:299px;width:1.7px;height:703.5px;background:#dbdce4"></div>
<div class="abs" style="left:753.5px;top:299px;width:1.7px;height:703.5px;background:#dbdce4"></div>
<div class="abs" style="left:1036.5px;top:299px;width:1.7px;height:703.5px;background:#dbdce4"></div>
<div class="mh" style="left:220px;top:307.3px">客户相关</div>
<div class="abs" style="left:220px;top:347.6px;width:202px;height:1.35px;background:#dcdde4"></div>
<div class="mh" style="left:503px;top:307.3px">供应商相关</div>
<div class="abs" style="left:503px;top:347.6px;width:203px;height:1.35px;background:#dcdde4"></div>
<div class="mh" style="left:787px;top:307.3px">内控相关</div>
<div class="abs" style="left:787px;top:347.6px;width:202px;height:1.35px;background:#dcdde4"></div>
<div class="mh" style="left:1070px;top:307.3px">库存成本</div>
<div class="abs" style="left:1070px;top:347.6px;width:129px;height:1.35px;background:#dcdde4"></div>
<div class="mi" style="left:220px;top:362.1px">收款单</div>
<div class="mc" style="left:380px;top:362.1px">创建</div>
<div class="mi" style="left:220px;top:417.2px">客户费用单</div>
<div class="mc" style="left:380px;top:417.2px">创建</div>
<div class="mi" style="left:220px;top:472.3px">客户收入单</div>
<div class="mc" style="left:380px;top:472.3px">创建</div>
<div class="mi" style="left:220px;top:527.4px">预收款单</div>
<div class="mc" style="left:380px;top:527.4px">创建</div>
<div class="mi" style="left:220px;top:582.5px">预收退款单</div>
<div class="mc" style="left:380px;top:582.5px">创建</div>
<div class="mi" style="left:220px;top:637.6px">销售结算单</div>
<div class="mi" style="left:220px;top:692.6px">退货结算单</div>
<div class="mi" style="left:220px;top:747.7px">销售调整单</div>
<div class="mc" style="left:380px;top:747.7px">创建</div>
<div class="mi" style="left:220px;top:802.8px">其他应收单</div>
<div class="mc" style="left:380px;top:802.8px">创建</div>
<div class="mi" style="left:220px;top:857.9px">客户对账单</div>
<div class="mc" style="left:380px;top:857.9px">创建</div>
<div class="mi" style="left:220px;top:913.0px">客户对账表</div>
<div class="mi" style="left:220px;top:968.1px">客户对账明细</div>
<div class="mi" style="left:503px;top:362.1px">付款单</div>
<div class="mc" style="left:664px;top:362.1px">创建</div>
<div class="mi" style="left:503px;top:417.2px">供应商费用单</div>
<div class="mc" style="left:664px;top:417.2px">创建</div>
<div class="mi" style="left:503px;top:472.3px">供应商收入单</div>
<div class="mc" style="left:664px;top:472.3px">创建</div>
<div class="mi" style="left:503px;top:527.4px">预付款单</div>
<div class="mc" style="left:664px;top:527.4px">创建</div>
<div class="mi" style="left:503px;top:582.5px">预付退款单</div>
<div class="mc" style="left:664px;top:582.5px">创建</div>
<div class="mi" style="left:503px;top:637.6px">采购结算单</div>
<div class="mi" style="left:503px;top:692.6px">采退结算单</div>
<div class="mi" style="left:503px;top:747.7px">其他应付单</div>
<div class="mc" style="left:664px;top:747.7px">创建</div>
<div class="mi" style="left:787px;top:362.1px">核销单</div>
<div class="mc" style="left:947px;top:362.1px">创建</div>
<div class="mi" style="left:787px;top:417.2px">内部费用单</div>
<div class="mc" style="left:947px;top:417.2px">创建</div>
<div class="mi" style="left:787px;top:472.3px">内部收入单</div>
<div class="mc" style="left:947px;top:472.3px">创建</div>
<div class="mi" style="left:787px;top:527.4px">资金转账单</div>
<div class="mc" style="left:947px;top:527.4px">创建</div>
<div class="mi" style="left:787px;top:582.5px">资金调账单</div>
<div class="mc" style="left:947px;top:582.5px">创建</div>
<div class="mi" style="left:787px;top:637.6px">成本调价单</div>
<div class="mc" style="left:947px;top:637.6px">创建</div>
<div class="mi" style="left:787px;top:692.6px">员工交账</div>
<div class="mi" style="left:787px;top:747.7px">员工交账明细</div>
<div class="mi" style="left:1070px;top:362.1px">库存成本查询</div>
<div class="mi" style="left:1070px;top:417.2px">库存成本汇总</div>
<div class="mi" style="left:1070px;top:472.3px">库存成本流水</div>
<div class="mi" style="left:1070px;top:527.4px">入库核算单</div>
<div class="mi" style="left:1070px;top:582.5px">出库核算单</div>
<div class="mi" style="left:1070px;top:637.6px">重算成本价</div>
<svg class="abs" style="left:0;top:0;z-index:10" width="2497" height="1078" viewBox="0 0 2497 1078">
<rect x="24.5" y="291.5" width="144" height="74" rx="3" fill="none" stroke="#fb1c10" stroke-width="4.6"/>
<rect x="2126.6" y="251.6" width="131.2" height="98.2" rx="3" fill="none" stroke="#fb1c10" stroke-width="4.8"/>
<rect x="197.5" y="942.6" width="198.9" height="69.6" rx="2.5" fill="none" stroke="#fb1c10" stroke-width="5.2"/>
<path d="M148.3 401.5 L149.6 401.3 L245.6 898.2 L250.8 897.2 L243.6 916.5 L230.4 901.2 L236.4 900 Z" fill="#fb1c10"/>
<path d="M455.6 956.4 L456.2 957.9 L2052.8 322.6 L2054.2 329.4 L2067 314.6 L2046.6 311.6 L2049.2 314 Z" fill="#fb1c10"/>
</svg>
</body></html>
